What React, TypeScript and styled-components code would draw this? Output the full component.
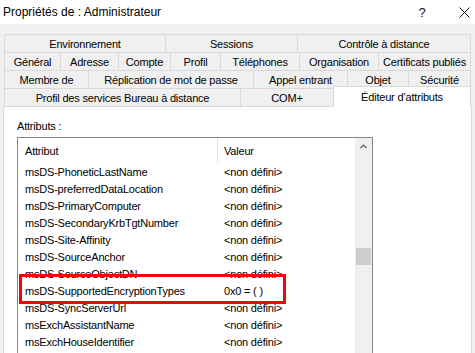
import React from "react";
import styled, { createGlobalStyle } from "styled-components";

const GlobalStyle = createGlobalStyle`
  html, body { margin: 0; padding: 0; width: 475px; height: 353px; overflow: hidden; background: #f0f0f0; }
  body { font-family: "Liberation Sans", Arial, sans-serif; color: #000; }
  * { box-sizing: border-box; }
`;

const Window = styled.div`
  width: 475px;
  height: 353px;
  display: flex;
  flex-direction: column;
  background: #f0f0f0;
  overflow: hidden;
`;

const TitleBar = styled.div`
  height: 24px;
  flex: none;
  background: #fff;
  display: flex;
  align-items: center;
  padding-left: 3px;
  font-size: 12px;
`;

const Title = styled.div`
  flex: 1;
  white-space: nowrap;
`;

const HelpButton = styled.div`
  width: 20px;
  text-align: center;
  font-size: 13px;
  color: #111;
  margin-right: 22px;
`;

const CloseButton = styled.div`
  width: 21px;
  display: flex;
  justify-content: center;
  align-items: center;
`;

const Body = styled.div`
  flex: 1;
  display: flex;
  flex-direction: column;
  padding: 10px 3px 0 3px;
  min-height: 0;
`;

const Tabs = styled.div`
  display: flex;
  flex-direction: column;
  margin: 0 1px;
  font-size: 11px;
  letter-spacing: -0.2px;
`;

const TabRow = styled.div`
  display: flex;
  align-items: flex-start;
`;

const Tab = styled.div<{ $w: number; $active?: boolean }>`
  flex: none;
  width: ${(p) => p.$w}px;
  height: ${(p) => (p.$active ? 21 : 18)}px;
  margin-top: ${(p) => (p.$active ? -2 : 0)}px;
  margin-bottom: ${(p) => (p.$active ? -1 : 0)}px;
  padding-bottom: ${(p) => (p.$active ? 1 : 0)}px;
  background: ${(p) => (p.$active ? "#fff" : "#f0f0f0")};
  border-top: 1px solid #d9d9d9;
  border-left: 1px solid #d9d9d9;
  position: relative;
  z-index: ${(p) => (p.$active ? 1 : 0)};
  display: flex;
  align-items: center;
  justify-content: center;
  white-space: nowrap;
  &:last-child {
    border-right: 1px solid #d9d9d9;
  }
`;

const Panel = styled.div`
  flex: 1;
  background: #fff;
  border: 1px solid #d9d9d9;
  padding: 13px 0 0 13px;
  display: flex;
  flex-direction: column;
  font-size: 11px;
  letter-spacing: -0.2px;
`;

const Label = styled.div`
  line-height: 13px;
  height: 13px;
  margin-bottom: 4px;
`;

const List = styled.div`
  position: relative;
  width: 356px;
  height: 240px;
  border: 1px solid #828790;
  display: flex;
  background: #fff;
`;

const ListBody = styled.div`
  flex: 1;
  display: flex;
  flex-direction: column;
`;

const HeaderRow = styled.div`
  height: 25px;
  display: flex;
`;

const HeaderCell = styled.div<{ $w?: number }>`
  ${(p) => (p.$w ? `width: ${p.$w}px; flex: none; border-right: 1px solid #e5e5e5;` : "flex: 1;")}
  padding-left: ${(p) => (p.$w ? 7 : 6)}px;
  display: flex;
  align-items: center;
  padding-top: 1px;
`;

const Row = styled.div`
  height: 17px;
  display: flex;
  align-items: center;
`;

const Cell = styled.div<{ $w?: number }>`
  ${(p) => (p.$w ? `width: ${p.$w}px; flex: none;` : "flex: 1;")}
  padding-left: ${(p) => (p.$w ? 7 : 6)}px;
  white-space: nowrap;
  overflow: hidden;
`;

const ScrollBar = styled.div`
  width: 17px;
  flex: none;
  background: #f0f0f0;
  display: flex;
  flex-direction: column;
`;

const ArrowButton = styled.div`
  height: 17px;
  display: flex;
  align-items: center;
  justify-content: center;
`;

const Track = styled.div<{ $offset: number }>`
  flex: 1;
  padding-top: ${(p) => p.$offset}px;
`;

const Thumb = styled.div`
  height: 17px;
  margin: 0 1px;
  background: #cdcdcd;
`;

const Highlight = styled.div`
  position: absolute;
  left: 1px;
  top: 136px;
  width: 267px;
  height: 30px;
  border: 3px solid #ff0000;
  pointer-events: none;
`;

const rows: [string, number][][] = [
  [["Environnement", 161], ["Sessions", 132], ["Contrôle à distance", 174]],
  [
    ["Général", 56],
    ["Adresse", 58],
    ["Compte", 52],
    ["Profil", 50],
    ["Téléphones", 79],
    ["Organisation", 79],
    ["Certificats publiés", 93],
  ],
  [
    ["Membre de", 84],
    ["Réplication de mot de passe", 165],
    ["Appel entrant", 94],
    ["Objet", 61],
    ["Sécurité", 63],
  ],
  [["Profil des services Bureau à distance", 236], ["COM+", 93], ["Éditeur d’attributs", 138]],
];

const ND = "<non défini>";
const attrs: [string, string][] = [
  ["msDS-PhoneticLastName", ND],
  ["msDS-preferredDataLocation", ND],
  ["msDS-PrimaryComputer", ND],
  ["msDS-SecondaryKrbTgtNumber", ND],
  ["msDS-Site-Affinity", ND],
  ["msDS-SourceAnchor", ND],
  ["msDS-SourceObjectDN", ND],
  ["msDS-SupportedEncryptionTypes", "0x0 = ( )"],
  ["msDS-SyncServerUrl", ND],
  ["msExchAssistantName", ND],
  ["msExchHouseIdentifier", ND],
];

export default function App() {
  return (
    <Window>
      <GlobalStyle />
      <TitleBar>
        <Title>Propriétés de : Administrateur</Title>
        <HelpButton>?</HelpButton>
        <CloseButton>
          <svg width="11" height="11" viewBox="0 0 11 11">
            <path d="M0.5 0.5 L10.5 10.5 M10.5 0.5 L0.5 10.5" stroke="#111" strokeWidth="1" fill="none" />
          </svg>
        </CloseButton>
      </TitleBar>
      <Body>
        <Tabs>
          {rows.map((r, i) => (
            <TabRow key={i}>
              {r.map(([t, w]) => (
                <Tab key={t} $w={w} $active={t.startsWith("Éditeur")}>
                  {t}
                </Tab>
              ))}
            </TabRow>
          ))}
        </Tabs>
        <Panel>
          <Label>Attributs :</Label>
          <List>
            <ListBody>
              <HeaderRow>
                <HeaderCell $w={200}>Attribut</HeaderCell>
                <HeaderCell>Valeur</HeaderCell>
              </HeaderRow>
              {attrs.map(([a, v]) => (
                <Row key={a}>
                  <Cell $w={200}>{a}</Cell>
                  <Cell>{v}</Cell>
                </Row>
              ))}
            </ListBody>
            <ScrollBar>
              <ArrowButton>
                <svg width="7" height="5" viewBox="0 0 7 5">
                  <polyline points="0.5,4 3.5,1 6.5,4" stroke="#606060" strokeWidth="1.2" fill="none" />
                </svg>
              </ArrowButton>
              <Track $offset={93}>
                <Thumb />
              </Track>
            </ScrollBar>
            <Highlight />
          </List>
        </Panel>
      </Body>
    </Window>
  );
}
